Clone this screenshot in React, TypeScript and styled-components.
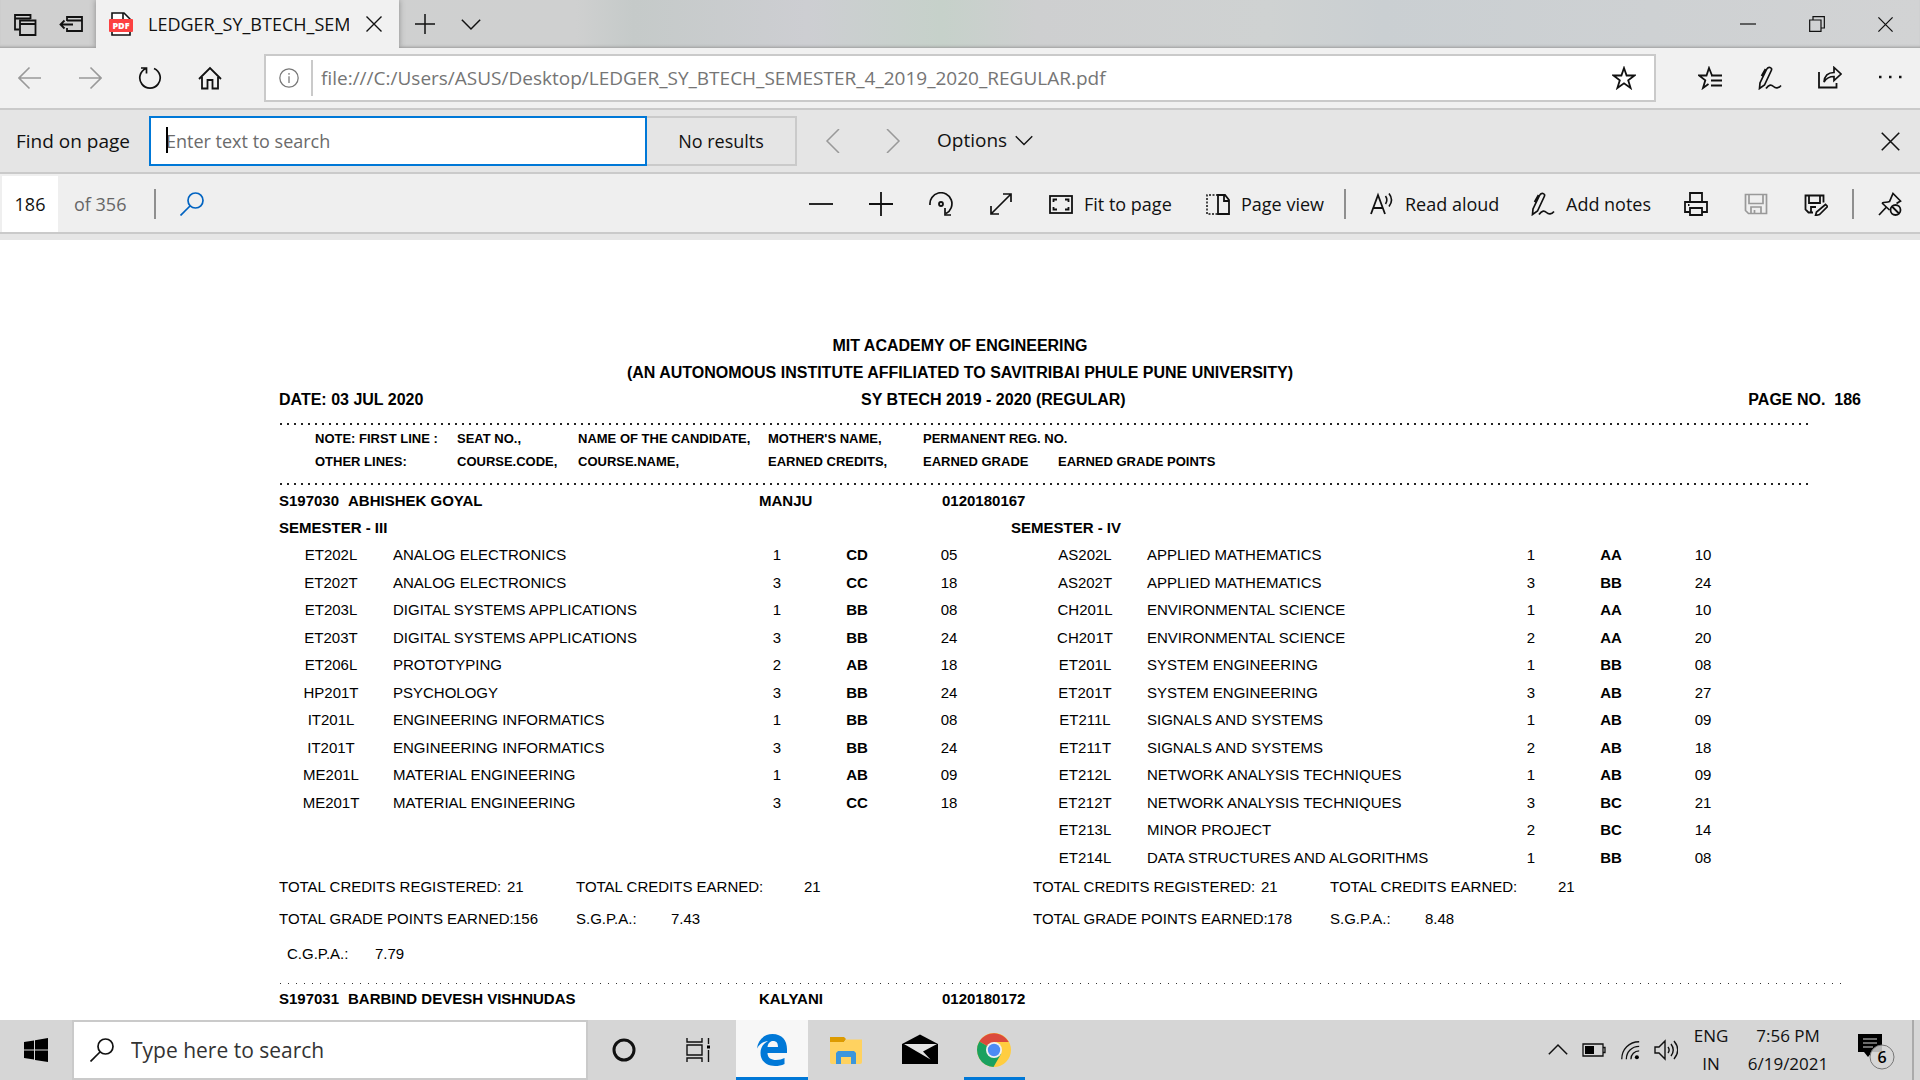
import React from "react";
import styled, { createGlobalStyle, css } from "styled-components";

const uiFont = `"Open Sans", "Noto Sans", sans-serif`;
const docFont = `"Liberation Sans", Arial, sans-serif`;

const GlobalStyle = createGlobalStyle`
  *, *::before, *::after { box-sizing: border-box; }
  body { margin: 0; overflow: hidden; background: #fff; font-family: ${uiFont}; color: #111; }
  button, input { font: inherit; color: inherit; }
  button { border: 0; padding: 0; background: none; cursor: pointer; }
`;

const Screen = styled.div`
  display: flex;
  flex-direction: column;
  height: 100vh;
`;

/* ---------- icons ---------- */

const Svg = styled.svg<{ $w?: number }>`
  display: block;
  flex: none;
  width: ${(p) => p.$w ?? 24}px;
  height: ${(p) => p.$w ?? 24}px;
  fill: none;
  stroke: currentColor;
  stroke-width: 1.8;
`;

type IconProps = { w?: number; children: React.ReactNode };
const Icon = ({ w = 24, children }: IconProps) => (
  <Svg $w={w} viewBox="0 0 24 24" aria-hidden="true">
    {children}
  </Svg>
);

const TabsAside = () => (
  <Icon>
    <path d="M6 17.500H2V3h15.500v4M2 6.500h15.500" />
    <path d="M7 8.500h15.500V23H7zM7 12h15.500" />
  </Icon>
);
const SetAside = () => (
  <Icon>
    <path d="M8 9V5h15v14H8v-3M8 8.500h15M1 12.500h13M5.500 8.500l-4 4 4 4" />
  </Icon>
);
const PdfIcon = () => (
  <Icon>
    <path d="M3 1h12l6 6v16H3z" fill="#fff" stroke="#111" strokeWidth="1.600" />
    <path d="M14 1v7h7" stroke="#111" strokeWidth="1.600" />
    <rect x="0" y="7" width="24" height="13" rx="1" fill="#fc4141" stroke="none" />
    <text x="12" y="17" textAnchor="middle" fontSize="9" fontWeight="800" fill="#fff" stroke="none">PDF</text>
  </Icon>
);
const Cross = ({ w = 24 }: { w?: number }) => (
  <Icon w={w}><path d="M2 2l20 20M22 2L2 22" /></Icon>
);
const Plus = ({ w = 24 }: { w?: number }) => <Icon w={w}><path d="M12 0v24M0 12h24" /></Icon>;
const Minus = () => <Icon><path d="M0 12h24" /></Icon>;
const ChevronDown = ({ w = 20 }: { w?: number }) => (
  <Icon w={w}><path d="M1 7l11 11L23 7" /></Icon>
);
const ChevronSide = ({ next }: { next?: boolean }) => (
  <Icon><path d={next ? "M6 0l12 12L6 24" : "M18 0L6 12l12 12"} strokeWidth="1.500" /></Icon>
);
const MinIcon = () => <Icon w={16}><path d="M0 12h24" /></Icon>;
const RestoreIcon = () => <Icon w={16}><path d="M1 6h17v17H1zM6 6V1h17v17h-5" /></Icon>;
const Arrow = ({ right }: { right?: boolean }) => (
  <Icon><path d={right ? "M1 12h22M12.500 1.500L23 12 12.500 22.500" : "M23 12H1M11.500 1.500L1 12l10.500 10.500"} strokeWidth="1.600" /></Icon>
);
const Refresh = () => (
  <Icon><path d="M16 2.500A10.200 10.200 0 1 1 8 2.500M3 2h5.500v5.500" strokeWidth="1.700" /></Icon>
);
const Home = () => <Icon><path d="M1 13L12 2 23 13M4 11v11.500h5.500V14h5v8.500H20V11" /></Icon>;
const InfoIcon = () => (
  <Icon w={20}><circle cx="12" cy="12" r="11" strokeWidth="1.500" /><path d="M12 10v8M12 6v2" strokeWidth="1.500" /></Icon>
);
const Star = () => <Icon><path d="M12 2l2.600 7.500h7.900l-6.300 4.800 2.400 7.700L12 17.300 5.400 22l2.400-7.700L1.500 9.500h7.900z" strokeWidth="1.800" /></Icon>;
const Favorites = () => (
  <Icon>
    <path d="M14 9.500L11 2 8.500 9.500H1l6.300 4.800L5 22l5.500-4" strokeWidth="1.800" />
    <path d="M13 9.500h11M13 14.500h11M13 19.500h11" />
  </Icon>
);
const Pen = () => (
  <Icon>
    <path d="M1.500 22.500L2 17 8.500 3.500c1-2 2-2.500 3.500-2s2 1.500 1.300 3L6.500 19l-5 3.500zM3.500 10L7.500 3" strokeWidth="1.700" />
    <path d="M8 22.500c3-4.500 5.500-4 7.500-2s5 2 7.500-1" strokeWidth="1.700" />
  </Icon>
);
const Share = () => (
  <Icon>
    <path d="M1 6v15.500h17.500V17" />
    <path d="M6 16c.500-6 3.500-9.500 10-9.500V1.500L23 8l-7 6.500V10.500c-4.500 0-7.500 1.500-10 5.500z" strokeWidth="1.700" />
  </Icon>
);
const Dots = () => (
  <Icon><path d="M1 11h2.500M11 11h2.500M21 11h2.500" strokeWidth="2.500" /></Icon>
);
const Search = () => (
  <Icon><circle cx="15.500" cy="8.500" r="7.500" strokeWidth="1.700" /><path d="M10 14L.500 23.500" strokeWidth="1.700" /></Icon>
);
const Rotate = () => (
  <Icon>
    <path d="M1 13A11 11 0 1 1 17 21.500M16 16v7h6" strokeWidth="1.700" />
    <circle cx="12" cy="12" r="2" />
  </Icon>
);
const Expand = () => <Icon><path d="M2.500 21.500l19-19M14 2h8v8M2 14v8h8" strokeWidth="1.700" /></Icon>;
const FitPage = () => (
  <Icon>
    <rect x="1" y="4" width="22" height="17" />
    <path d="M4.500 10V7.500H8M16 7.500h3.500V10M4.500 15v2.500H8M16 17.500h3.500V15" />
  </Icon>
);
const PageView = () => (
  <Icon>
    <path d="M12 3H1v19h11" strokeDasharray="2 1.500" strokeWidth="1.500" />
    <path d="M12 3h7l4 5v14H12zM18 3v6h5" />
  </Icon>
);
const ReadAloud = () => (
  <Icon>
    <path d="M1 22L8 3l7 19M3.500 16h9" strokeWidth="1.800" />
    <path d="M15.500 4c2 3 2 5 0 8M19 1.500c3.500 4.500 3.500 8.500 0 13" strokeWidth="1.600" />
  </Icon>
);
const Printer = () => (
  <Icon>
    <path d="M6 10V1h12v9M6 20H1V10h22v10h-5M6 16h12v7H6zM4 13h1.500" />
  </Icon>
);
const Save = () => (
  <Icon><path d="M1.500 2.500h21v19h-18l-3-3zM5 3v8.500h14V3M7 21v-6h10v6M10.500 18v3" strokeWidth="1.700" /></Icon>
);
const SaveAs = () => (
  <Icon>
    <path d="M9 20.500H4.500l-3-3v-14h18v7M5 4v7h11V4M7 20v-5h5" />
    <path d="M11.500 23.500l1-3.500L21.500 12.500l2 2-8 8z" strokeWidth="1.700" />
  </Icon>
);
const Unpin = () => (
  <Icon>
    <path d="M1 23l7.500-8M4 11l7.500 7M4 11c3-1 5-.500 7.500-1.500L15 1.500 22.500 9l-4 2.500" strokeWidth="1.700" />
    <circle cx="17.500" cy="18" r="5" />
    <path d="M14 14.500l7 7" />
  </Icon>
);

/* ---------- tab strip ---------- */

const TabStrip = styled.header`
  display: flex;
  flex: none;
  height: 48px;
  background: linear-gradient(90deg, #d0d0d0 0, #cfd0d0 30%, #c5cac9 33%, #cdced2 42%, #c6d1ca 49%, #cecfd0 54%, #cfd2d2 66%, #cacfd2 72%, #d2d3d4 100%);
  box-shadow: inset 0 -3px 3px -2px #999;
`;
const StripGroup = styled.div<{ $pad: number; $gap: number }>`
  display: flex;
  align-items: center;
  padding: 0 ${(p) => p.$pad}px;
  gap: ${(p) => p.$gap}px;
`;
const StripButton = styled.button`
  display: grid;
  place-items: center;
`;
const Tab = styled.div`
  display: flex;
  align-items: center;
  width: 303px;
  padding: 0 16px 0 13px;
  background: #f1f1f1;
  box-shadow: 0 0 6px #888;
  clip-path: inset(0 -8px 0 -8px);
`;
const TabTitle = styled.span`
  flex: 1;
  margin: 0 16px 0 15px;
  overflow: hidden;
  white-space: nowrap;
  font-size: 18px;
  line-height: 28px;
`;
const WindowControls = styled.div`
  display: flex;
  margin-left: auto;
`;
const WindowButton = styled.button`
  display: grid;
  place-items: center;
  width: 69px;
`;

/* ---------- navigation ---------- */

const NavBar = styled.nav`
  display: flex;
  flex: none;
  align-items: center;
  height: 62px;
  background: #f1f1f1;
  border-bottom: 2px solid #cacaca;
`;
const ToolButton = styled.button<{ $dim?: boolean }>`
  display: grid;
  place-items: center;
  flex: none;
  width: 60px;
  height: 56px;
  color: ${(p) => (p.$dim ? "#999" : "#111")};
`;
const AddressBar = styled.div`
  display: flex;
  flex: 1;
  align-items: center;
  height: 48px;
  margin: 0 24px;
  padding-left: 13px;
  background: #fff;
  border: 2px solid #cacaca;
`;
const InfoButton = styled.button`
  padding-right: 12px;
  color: #777;
`;
const AddressInput = styled.input`
  flex: 1;
  min-width: 0;
  height: 36px;
  padding: 0 8px;
  border: 0;
  border-left: 2px solid #cacaca;
  outline: 0;
  background: none;
  color: #757575;
  font-size: 19px;
`;

/* ---------- find bar ---------- */

const FindBar = styled.form`
  display: flex;
  flex: none;
  align-items: center;
  height: 64px;
  padding-left: 16px;
  background: #e5e5e5;
  border-bottom: 2px solid #cacaca;
  font-size: 18px;
`;
const FindLabel = styled.label`
  width: 133px;
  font-size: 19px;
`;
const FindField = styled.div`
  position: relative;
  width: 498px;
`;
const FindInput = styled.input`
  display: block;
  width: 100%;
  height: 50px;
  padding: 0 15px;
  border: 2px solid #0078d7;
  outline: 0;
  background: #fff;
  &::placeholder { color: #6b6b6b; opacity: 1; }
`;
const Caret = styled.span`
  position: absolute;
  left: 17px;
  top: 11px;
  width: 2px;
  height: 26px;
  background: #000;
`;
const FindResults = styled.output`
  display: grid;
  place-items: center;
  width: 150px;
  height: 50px;
  border: 2px solid #cacaca;
  border-left: 0;
`;
const FindArrows = styled.div`
  display: flex;
  margin: 0 14px 0 6px;
`;
const OptionsButton = styled.button`
  display: flex;
  align-items: center;
  gap: 8px;
  font-size: 19px;
  line-height: 26px;
  padding-bottom: 2px;
`;
const FindClose = styled(ToolButton)`
  margin-left: auto;
`;

/* ---------- PDF toolbar ---------- */

const PdfBar = styled.div`
  display: flex;
  flex: none;
  align-items: center;
  height: 66px;
  background: #efefef;
  border-bottom: 6px solid #e6e6e6;
  box-shadow: inset 0 -2px 0 #cacaca;
  font-size: 18px;
`;
const PageInput = styled.input`
  width: 56px;
  height: 56px;
  margin: 0 16px 0 2px;
  padding: 0;
  border: 0;
  background: #fff;
  text-align: center;
`;
const PageTotal = styled.span`
  width: 80px;
  color: #666;
`;
const Separator = styled.span<{ $gap: number }>`
  width: 2px;
  height: 30px;
  margin: 0 ${(p) => p.$gap}px;
  background: #8f8f8f;
`;
const PdfActions = styled.div`
  display: flex;
  align-items: center;
  margin-left: auto;
`;
const TextTool = styled.button<{ $w: number }>`
  display: flex;
  align-items: center;
  gap: 11px;
  width: ${(p) => p.$w}px;
  height: 56px;
  padding-left: 18px;
  white-space: nowrap;
`;
const SearchTool = styled(ToolButton)`
  width: 72px;
  color: #0063c1;
`;

/* ---------- document ---------- */

const Sheet = styled.main`
  flex: 1;
  min-height: 0;
  overflow: hidden;
  padding-top: 92px;
  background: #fff;
  font-family: ${docFont};
  font-size: 15px;
  line-height: 27px;
  color: #000;
`;
const Title = styled.h1`
  margin: 0;
  text-align: center;
  font-size: 16px;
  font-weight: 700;
`;
const Body = styled.div`
  padding: 0 59px 0 279px;
  white-space: nowrap;
`;
const RunningHead = styled.div`
  display: grid;
  grid-template-columns: 582px 1fr auto;
  font-size: 16px;
  font-weight: 700;
  white-space: pre;
`;
const DottedRule = styled.hr<{ $light?: boolean }>`
  height: 2px;
  border: 0;
  ${(p) =>
    p.$light
      ? css`
          margin: 10px 20px 1px 1px;
          height: 1px;
          background: repeating-linear-gradient(90deg, #333 0 1px, transparent 1px 8px);
        `
      : css`
          margin: 10px 51px 2px 1px;
          background: repeating-linear-gradient(90deg, #222 0 2px, transparent 2px 7px);
        `}
`;
const Legend = styled.div`
  display: grid;
  grid-template-columns: 142px 121px 190px 155px 135px auto;
  justify-content: start;
  padding-left: 36px;
  font-size: 13px;
  font-weight: 700;
  line-height: 23px;
`;
const StudentRow = styled.div`
  display: grid;
  grid-template-columns: 69px 411px 183px auto;
  font-weight: 700;
`;
const Semesters = styled.div`
  display: grid;
  grid-template-columns: 732px 1fr;
`;
const Semester = styled.section<{ $inset?: boolean }>`
  display: flex;
  flex-direction: column;
  > table, > dl { margin-left: ${(p) => (p.$inset ? 22 : 0)}px; }
`;
const SemesterTitle = styled.h2`
  margin: 0;
  font-size: 15px;
  font-weight: 700;
`;
const Grades = styled.table`
  width: 722px;
  border-collapse: collapse;
  table-layout: fixed;
  td { height: 27px; padding: 0; text-align: center; }
  tr:nth-child(even) td { height: 28px; }
  td:nth-child(1) { width: 104px; }
  td:nth-child(2) { width: 354px; padding-left: 10px; text-align: left; }
  td:nth-child(3) { width: 80px; }
  td:nth-child(4) { width: 80px; font-weight: 700; }
  td:nth-child(5) { width: 104px; }
`;
const Totals = styled.dl`
  margin: auto 0 0;
`;
const TotalsRow = styled.div<{ $cols: string }>`
  display: grid;
  grid-template-columns: ${(p) => p.$cols};
  line-height: 32px;
  dt, dd { margin: 0; }
`;
const Cumulative = styled.dl`
  display: grid;
  grid-template-columns: 88px auto;
  margin: 0;
  padding-left: 8px;
  line-height: 38px;
  dd { margin: 0; }
`;

/* ---------- taskbar ---------- */

const Taskbar = styled.footer`
  display: flex;
  flex: none;
  height: 60px;
  background: #d6d6d6;
`;
const StartButton = styled.button`
  display: grid;
  place-items: center;
  width: 72px;
`;
const TaskSearch = styled.label`
  display: flex;
  align-items: center;
  gap: 17px;
  width: 516px;
  padding-left: 16px;
  border: 2px solid #cacaca;
  background: #fff;
`;
const TaskSearchInput = styled.input`
  flex: 1;
  min-width: 0;
  padding: 0;
  border: 0;
  outline: 0;
  background: none;
  font-size: 21px;
  &::placeholder { color: #333; opacity: 1; }
`;
const TaskApps = styled.div`
  display: flex;
  gap: 2px;
`;
const TaskApp = styled.button<{ $active?: boolean; $open?: boolean }>`
  display: grid;
  place-items: center;
  width: 72px;
  ${(p) => p.$active && css`background: #f7f7f7; box-shadow: inset 0 -3px 0 #0078d7;`}
  ${(p) =>
    p.$open &&
    css`
      background: linear-gradient(#0078d7, #0078d7) center bottom / 61px 3px no-repeat;
    `}
`;
const Tray = styled.div`
  display: flex;
  align-items: center;
  gap: 12px;
  margin-left: auto;
`;
const TrayButton = styled.button`
  display: grid;
  place-items: center;
  width: 24px;
  height: 60px;
`;
const TrayText = styled.button<{ $w: number }>`
  width: ${(p) => p.$w}px;
  font-size: 17px;
  line-height: 28px;
  text-align: center;
`;
const Notifications = styled.button`
  width: 70px;
  height: 60px;
  border-right: 2px solid #aaa;
  padding-left: 12px;
  margin-right: 6px;
`;

type Row = [string, string, string, string, string];

const third: Row[] = [
  ["ET202L", "ANALOG ELECTRONICS", "1", "CD", "05"],
  ["ET202T", "ANALOG ELECTRONICS", "3", "CC", "18"],
  ["ET203L", "DIGITAL SYSTEMS APPLICATIONS", "1", "BB", "08"],
  ["ET203T", "DIGITAL SYSTEMS APPLICATIONS", "3", "BB", "24"],
  ["ET206L", "PROTOTYPING", "2", "AB", "18"],
  ["HP201T", "PSYCHOLOGY", "3", "BB", "24"],
  ["IT201L", "ENGINEERING INFORMATICS", "1", "BB", "08"],
  ["IT201T", "ENGINEERING INFORMATICS", "3", "BB", "24"],
  ["ME201L", "MATERIAL ENGINEERING", "1", "AB", "09"],
  ["ME201T", "MATERIAL ENGINEERING", "3", "CC", "18"],
];
const fourth: Row[] = [
  ["AS202L", "APPLIED MATHEMATICS", "1", "AA", "10"],
  ["AS202T", "APPLIED MATHEMATICS", "3", "BB", "24"],
  ["CH201L", "ENVIRONMENTAL SCIENCE", "1", "AA", "10"],
  ["CH201T", "ENVIRONMENTAL SCIENCE", "2", "AA", "20"],
  ["ET201L", "SYSTEM ENGINEERING", "1", "BB", "08"],
  ["ET201T", "SYSTEM ENGINEERING", "3", "AB", "27"],
  ["ET211L", "SIGNALS AND SYSTEMS", "1", "AB", "09"],
  ["ET211T", "SIGNALS AND SYSTEMS", "2", "AB", "18"],
  ["ET212L", "NETWORK ANALYSIS TECHNIQUES", "1", "AB", "09"],
  ["ET212T", "NETWORK ANALYSIS TECHNIQUES", "3", "BC", "21"],
  ["ET213L", "MINOR PROJECT", "2", "BC", "14"],
  ["ET214L", "DATA STRUCTURES AND ALGORITHMS", "1", "BB", "08"],
];

type SemesterProps = { title: string; rows: Row[]; points: string; sgpa: string; inset?: boolean };

const SemesterBlock = ({ title, rows, points, sgpa, inset }: SemesterProps) => (
  <Semester $inset={inset}>
    <SemesterTitle>{title}</SemesterTitle>
    <Grades>
      <tbody>
        {rows.map((row) => (
          <tr key={row[0]}>{row.map((cell, i) => <td key={i}>{cell}</td>)}</tr>
        ))}
      </tbody>
    </Grades>
    <Totals>
      <TotalsRow $cols="228px 69px 228px auto">
        <dt>TOTAL CREDITS REGISTERED:</dt><dd>21</dd>
        <dt>TOTAL CREDITS EARNED:</dt><dd>21</dd>
      </TotalsRow>
      <TotalsRow $cols="234px 63px 95px auto">
        <dt>TOTAL GRADE POINTS EARNED:</dt><dd>{points}</dd>
        <dt>S.G.P.A.:</dt><dd>{sgpa}</dd>
      </TotalsRow>
    </Totals>
  </Semester>
);

const Student = ({ seat, name, mother, reg }: { seat: string; name: string; mother: string; reg: string }) => (
  <StudentRow>
    <span>{seat}</span><span>{name}</span><span>{mother}</span><span>{reg}</span>
  </StudentRow>
);

export default function App() {
  return (
    <Screen>
      <GlobalStyle />
      <TabStrip>
        <StripGroup $pad={13} $gap={22}>
          <StripButton aria-label="Tabs you've set aside"><TabsAside /></StripButton>
          <StripButton aria-label="Set these tabs aside"><SetAside /></StripButton>
        </StripGroup>
        <Tab>
          <PdfIcon />
          <TabTitle>LEDGER_SY_BTECH_SEMESTER_4_2019_2020_REGULAR.pdf</TabTitle>
          <StripButton aria-label="Close tab"><Cross w={18} /></StripButton>
        </Tab>
        <StripGroup $pad={16} $gap={26}>
          <StripButton aria-label="New tab"><Plus w={20} /></StripButton>
          <StripButton aria-label="Tab previews"><ChevronDown /></StripButton>
        </StripGroup>
        <WindowControls>
          <WindowButton aria-label="Minimize"><MinIcon /></WindowButton>
          <WindowButton aria-label="Restore"><RestoreIcon /></WindowButton>
          <WindowButton aria-label="Close"><Cross w={17} /></WindowButton>
        </WindowControls>
      </TabStrip>

      <NavBar>
        <ToolButton $dim aria-label="Back"><Arrow /></ToolButton>
        <ToolButton $dim aria-label="Forward"><Arrow right /></ToolButton>
        <ToolButton aria-label="Refresh"><Refresh /></ToolButton>
        <ToolButton aria-label="Home"><Home /></ToolButton>
        <AddressBar>
          <InfoButton aria-label="Site information"><InfoIcon /></InfoButton>
          <AddressInput aria-label="Address" defaultValue="file:///C:/Users/ASUS/Desktop/LEDGER_SY_BTECH_SEMESTER_4_2019_2020_REGULAR.pdf" />
          <ToolButton aria-label="Add to favorites"><Star /></ToolButton>
        </AddressBar>
        <ToolButton aria-label="Favorites"><Favorites /></ToolButton>
        <ToolButton aria-label="Add notes"><Pen /></ToolButton>
        <ToolButton aria-label="Share"><Share /></ToolButton>
        <ToolButton aria-label="More"><Dots /></ToolButton>
      </NavBar>

      <FindBar>
        <FindLabel htmlFor="find">Find on page</FindLabel>
        <FindField>
          <FindInput id="find" placeholder="Enter text to search" />
          <Caret />
        </FindField>
        <FindResults>No results</FindResults>
        <FindArrows>
          <ToolButton type="button" $dim aria-label="Previous"><ChevronSide /></ToolButton>
          <ToolButton type="button" $dim aria-label="Next"><ChevronSide next /></ToolButton>
        </FindArrows>
        <OptionsButton type="button">Options <ChevronDown w={18} /></OptionsButton>
        <FindClose type="button" aria-label="Close find bar"><Cross w={21} /></FindClose>
      </FindBar>

      <PdfBar>
        <PageInput aria-label="Page" defaultValue="186" />
        <PageTotal>of 356</PageTotal>
        <Separator $gap={0} />
        <SearchTool aria-label="Search"><Search /></SearchTool>
        <PdfActions>
          <ToolButton aria-label="Zoom out"><Minus /></ToolButton>
          <ToolButton aria-label="Zoom in"><Plus /></ToolButton>
          <ToolButton aria-label="Rotate"><Rotate /></ToolButton>
          <ToolButton aria-label="Full screen"><Expand /></ToolButton>
          <TextTool $w={157}><FitPage />Fit to page</TextTool>
          <TextTool $w={150}><PageView />Page view</TextTool>
          <Separator $gap={6} />
          <TextTool $w={161}><ReadAloud />Read aloud</TextTool>
          <TextTool $w={153}><Pen />Add notes</TextTool>
          <ToolButton aria-label="Print"><Printer /></ToolButton>
          <ToolButton $dim aria-label="Save"><Save /></ToolButton>
          <ToolButton aria-label="Save as"><SaveAs /></ToolButton>
          <Separator $gap={6} />
          <ToolButton aria-label="Unpin toolbar"><Unpin /></ToolButton>
        </PdfActions>
      </PdfBar>

      <Sheet>
        <Title>MIT ACADEMY OF ENGINEERING<br />(AN AUTONOMOUS INSTITUTE AFFILIATED TO SAVITRIBAI PHULE PUNE UNIVERSITY)</Title>
        <Body>
          <RunningHead>
            <span>DATE: 03 JUL 2020</span>
            <span>SY BTECH 2019 - 2020 (REGULAR)</span>
            <span>{"PAGE NO.  186"}</span>
          </RunningHead>
          <DottedRule />
          <Legend>
            <span>NOTE: FIRST LINE :</span><span>SEAT NO.,</span><span>NAME OF THE CANDIDATE,</span>
            <span>MOTHER'S NAME,</span><span>PERMANENT REG. NO.</span><span />
            <span>OTHER LINES:</span><span>COURSE.CODE,</span><span>COURSE.NAME,</span>
            <span>EARNED CREDITS,</span><span>EARNED GRADE</span><span>EARNED GRADE POINTS</span>
          </Legend>
          <DottedRule />
          <Student seat="S197030" name="ABHISHEK GOYAL" mother="MANJU" reg="0120180167" />
          <Semesters>
            <SemesterBlock title="SEMESTER - III" rows={third} points="156" sgpa="7.43" />
            <SemesterBlock title="SEMESTER - IV" rows={fourth} points="178" sgpa="8.48" inset />
          </Semesters>
          <Cumulative>
            <dt>C.G.P.A.:</dt><dd>7.79</dd>
          </Cumulative>
          <DottedRule $light />
          <Student seat="S197031" name="BARBIND DEVESH VISHNUDAS" mother="KALYANI" reg="0120180172" />
        </Body>
      </Sheet>

      <Taskbar>
        <StartButton aria-label="Start">
          <Icon><path d="M0 4l10-1.500v9H0zM11 2.300L24 0v11.500H11zM0 12.500h10v9L0 20zM11 12.500h13V24l-13-2z" fill="#000" stroke="none" /></Icon>
        </StartButton>
        <TaskSearch>
          <Search />
          <TaskSearchInput aria-label="Type here to search" placeholder="Type here to search" />
        </TaskSearch>
        <TaskApps>
          <TaskApp aria-label="Cortana"><Icon><circle cx="12" cy="12" r="10" strokeWidth="3" /></Icon></TaskApp>
          <TaskApp aria-label="Task view">
            <Icon>
              <path d="M1 0v4h15V0M1 24v-4h15v4M1 7h15v10H1zM22.500 0v6M22.500 12v12" strokeWidth="1.400" />
              <path d="M21 7.500h3v3h-3z" fill="#000" stroke="none" />
            </Icon>
          </TaskApp>
          <TaskApp $active aria-label="Microsoft Edge">
            <Svg $w={32} viewBox="0 0 32 32">
              <path d="M1 14.500C2 6 8 0 16.500 0 26 0 31 6.500 31 15v4H11.500c0 5 4 7 8.500 7 3.500 0 6-.8 8.500-2v6c-3 1.500-6 2-9.500 2C10.500 32 4.500 27 4.500 19c0-5.500 3-9.500 7.500-12C7 7.500 3.500 10 1 14.500zM11.500 13H22c0-4-1.500-6-5-6-3 0-5 2.500-5.500 6z" fill="#0078d7" stroke="none" />
            </Svg>
          </TaskApp>
          <TaskApp aria-label="File Explorer">
            <Svg $w={32} viewBox="0 0 32 32">
              <path d="M0 3h14l2 2-2 3H0z" fill="#dd9b00" stroke="none" />
              <path d="M0 8h14l2-2.500h16V28a2 2 0 0 1-2 2H2a2 2 0 0 1-2-2z" fill="#ffd260" stroke="none" />
              <path d="M6 30V19l2-2h16l2 2v11h-5v-7H11v7z" fill="#3c96dc" stroke="none" />
            </Svg>
          </TaskApp>
          <TaskApp aria-label="Mail">
            <Svg $w={36} viewBox="0 0 36 36">
              <path d="M0 12l18-9.500L36 12v20H0z" fill="#000" stroke="none" />
              <path d="M2 12h33l-14 7.500 7.500 8z" fill="#e3e3e3" stroke="none" />
            </Svg>
          </TaskApp>
          <TaskApp $open aria-label="Google Chrome">
            <Svg $w={34} viewBox="0 0 34 34">
              <circle cx="17" cy="17" r="17" fill="#ffcd40" stroke="none" />
              <path d="M17 17L2.300 8.500A17 17 0 0 1 31.700 9H17z" fill="#db4a3c" stroke="none" />
              <path d="M2.300 8.500A17 17 0 0 0 16.500 34L24 21l-7-4z" fill="#1aa15f" stroke="none" />
              <circle cx="17" cy="17" r="8" fill="#f1f1f1" stroke="none" />
              <circle cx="17" cy="17" r="6.200" fill="#4c8bf5" stroke="none" />
            </Svg>
          </TaskApp>
        </TaskApps>
        <Tray>
          <TrayButton aria-label="Show hidden icons"><Icon w={20}><path d="M1 17L12 6l11 11" strokeWidth="1.800" /></Icon></TrayButton>
          <TrayButton aria-label="Battery">
            <Icon><path d="M1 6h20v12H1zM21.500 9.500H23v5h-1.500" strokeWidth="1.300" /><path d="M3 8h9v8H3z" fill="#000" stroke="none" /></Icon>
          </TrayButton>
          <TrayButton aria-label="Network">
            <Icon w={22}>
              <path d="M3 22C3 11 11 3 22 3M8 22c0-8 6-14 14-14M13 22c0-5 4-9 9-9" strokeWidth="1.400" />
              <circle cx="19.500" cy="20" r="2.200" fill="#000" stroke="none" />
            </Icon>
          </TrayButton>
          <TrayButton aria-label="Volume">
            <Icon><path d="M1 9h4l6-6v18l-6-6H1zM14 9c1.500 2 1.500 4 0 6M17 6c3 4 3 8 0 12M20 3c5 6 5 12 0 18" strokeWidth="1.400" /></Icon>
          </TrayButton>
          <TrayText $w={42}>ENG<br />IN</TrayText>
          <TrayText $w={88}>7:56 PM<br />6/19/2021</TrayText>
          <Notifications aria-label="Notifications">
            <Svg $w={40} viewBox="0 0 40 40">
              <path d="M2 4h24v18H16l-4 5-4-5H2z" fill="#000" stroke="none" />
              <path d="M7 9h14M7 13h14M7 17h10" stroke="#d6d6d6" strokeWidth="1.200" />
              <circle cx="26" cy="27" r="12" fill="#d6d6d6" fillOpacity=".85" stroke="#777" strokeWidth="1" />
              <text x="26" y="33" textAnchor="middle" fontSize="16" fontWeight="600" fill="#000" stroke="none">6</text>
            </Svg>
          </Notifications>
        </Tray>
      </Taskbar>
    </Screen>
  );
}
